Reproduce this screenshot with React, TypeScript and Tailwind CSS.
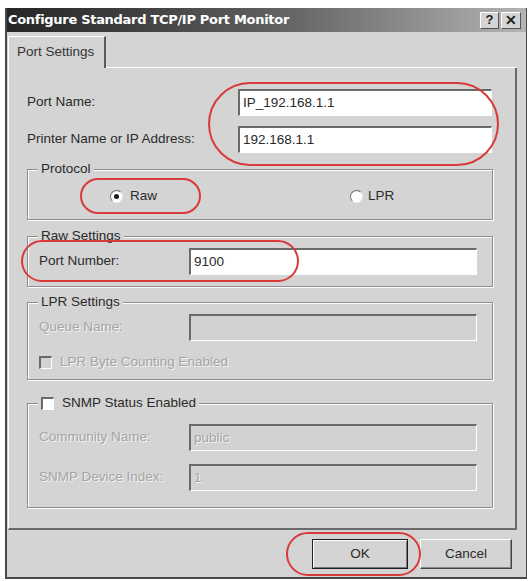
import React from 'react';

const font = { fontFamily: '"Liberation Sans", Arial, sans-serif' };

// Sunken edit box, classic 3D look
const Field = ({ value, disabled, className = '' }: { value?: string; disabled?: boolean; className?: string }) => (
  <div
    className={`h-[27px] border-t-2 border-l-2 border-b border-r border-t-[#6a6a6a] border-l-[#6a6a6a] border-b-white border-r-white flex items-center pl-[3px] text-[13.5px] ${
      disabled ? 'bg-[#d2d2d2] text-[#a4a4a4]' : 'bg-white text-[#2a2a2a]'
    } ${className}`}
  >
    {value}
  </div>
);

const GroupBox = ({
  title,
  className = '',
  children,
  disabledTitle,
}: {
  title: React.ReactNode;
  className?: string;
  children: React.ReactNode;
  disabledTitle?: boolean;
}) => (
  <div className={`relative border border-[#8e8e8e] shadow-[inset_1px_1px_0_#fff,1px_1px_0_#fff] ${className}`}>
    <div
      className={`absolute -top-[9px] left-[10px] bg-[#d4d4d4] px-[3px] text-[13.5px] leading-[16px] ${
        disabledTitle ? 'text-[#a4a4a4]' : 'text-[#2a2a2a]'
      }`}
    >
      {title}
    </div>
    {children}
  </div>
);

const Checkbox = ({ disabled }: { disabled?: boolean }) => (
  <span
    className={`inline-block w-[13px] h-[13px] border-t-2 border-l-2 border-b border-r border-t-[#6a6a6a] border-l-[#6a6a6a] border-b-white border-r-white ${
      disabled ? 'bg-[#d2d2d2]' : 'bg-white'
    }`}
  />
);

const Radio = ({ checked }: { checked?: boolean }) => (
  <span className="inline-flex w-[13px] h-[13px] rounded-full bg-white border border-t-[#6a6a6a] border-l-[#6a6a6a] border-b-[#f0f0f0] border-r-[#f0f0f0] items-center justify-center">
    {checked && <span className="w-[5px] h-[5px] rounded-full bg-[#1a1a1a]" />}
  </span>
);

const Ring = ({ className }: { className: string }) => (
  <div className={`absolute rounded-[999px] border-[2.5px] border-[#d83a3a] pointer-events-none ${className}`} />
);

export default function App() {
  return (
    <div className="relative w-[529px] h-[581px] bg-white overflow-hidden" style={font}>
      <div className="ml-[5px] mt-[8px] w-[522px] h-[571px] border-l-2 border-b-2 border-r border-[#4a4a4a] bg-[#d4d4d4] flex flex-col">
        {/* title bar */}
        <div className="h-[24px] flex items-center bg-gradient-to-r from-[#262626] via-[#5e5e5e] to-[#b4b4b4] overflow-hidden">
          <span
            className="ml-[1px] text-white font-bold text-[13px] whitespace-nowrap tracking-[-0.3px]"
            style={{ fontFamily: '"DejaVu Sans", Verdana, sans-serif' }}
          >
            Configure Standard TCP/IP Port Monitor
          </span>
          <div className="ml-auto mr-[5px] flex gap-[2px]">
            <div className="w-[19px] h-[17px] bg-[#d4d4d4] border border-t-white border-l-white border-b-[#555] border-r-[#555] flex items-center justify-center text-[13px] font-bold text-[#222]">
              ?
            </div>
            <div className="w-[20px] h-[17px] bg-[#d4d4d4] border border-t-white border-l-white border-b-[#555] border-r-[#555] flex items-center justify-center text-[14px] font-bold text-[#222]">
              ✕
            </div>
          </div>
        </div>

        {/* tab strip */}
        <div className="pl-[1px] pt-[4px] flex items-end">
          <div className="w-[98px] h-[32px] border-t border-l border-white border-r-2 border-r-[#5a5a5a] flex items-center pl-[8px] text-[13.5px] text-[#333]">
            Port Settings
          </div>
          <div className="w-[410px] border-b border-white" />
        </div>

        {/* tab page */}
        <div className="ml-[1px] w-[509px] h-[462px] border-l border-white border-r-2 border-r-[#6a6a6a] border-b-2 border-b-[#6a6a6a] px-[18px] pt-[21px] text-[#2a2a2a] text-[13.5px]">
          <div className="flex items-center">
            <span className="w-[211px]">Port Name:</span>
            <Field value="IP_192.168.1.1" className="w-[254px]" />
          </div>
          <div className="flex items-center mt-[10px]">
            <span className="w-[211px]">Printer Name or IP Address:</span>
            <Field value="192.168.1.1" className="w-[254px]" />
          </div>

          <GroupBox title="Protocol" className="mt-[16px] h-[51px] w-[466px]">
            <div className="flex items-center h-full pt-[3px]">
              <div className="ml-[82px] flex items-center gap-[7px]">
                <Radio checked />
                <span>Raw</span>
              </div>
              <div className="ml-[193px] flex items-center gap-[5px]">
                <Radio />
                <span>LPR</span>
              </div>
            </div>
          </GroupBox>

          <GroupBox title="Raw Settings" className="mt-[16px] h-[51px] w-[466px]">
            <div className="flex items-center pl-[11px] pt-[11px]">
              <span className="w-[150px]">Port Number:</span>
              <Field value="9100" className="w-[288px]" />
            </div>
          </GroupBox>

          <GroupBox title="LPR Settings" className="mt-[15px] h-[78px] w-[466px]">
            <div className="flex items-center pl-[11px] pt-[11px] text-[#a4a4a4] [text-shadow:1px_1px_0_#f4f4f4]">
              <span className="w-[150px]">Queue Name:</span>
              <Field disabled className="w-[288px]" />
            </div>
            <div className="flex items-center gap-[8px] pl-[11px] mt-[11px] text-[#a4a4a4] [text-shadow:1px_1px_0_#f4f4f4]">
              <Checkbox disabled />
              <span>LPR Byte Counting Enabled</span>
            </div>
          </GroupBox>

          <GroupBox
            title={
              <span className="flex items-center gap-[8px]">
                <Checkbox />
                SNMP Status Enabled
              </span>
            }
            className="mt-[23px] h-[105px] w-[466px]"
          >
            <div className="flex items-center pl-[11px] pt-[20px] text-[#a4a4a4] [text-shadow:1px_1px_0_#f4f4f4]">
              <span className="w-[150px]">Community Name:</span>
              <Field disabled value="public" className="w-[288px]" />
            </div>
            <div className="flex items-center pl-[11px] mt-[13px] text-[#a4a4a4] [text-shadow:1px_1px_0_#f4f4f4]">
              <span className="w-[150px]">SNMP Device Index:</span>
              <Field disabled value="1" className="w-[288px]" />
            </div>
          </GroupBox>
        </div>

        {/* dialog buttons */}
        <div className="flex justify-end gap-[12px] pr-[14px] pt-[9px] text-[13.5px] text-[#2a2a2a]">
          <button className="w-[96px] h-[30px] bg-[#d4d4d4] border border-[#1e1e1e] shadow-[inset_1px_1px_0_#fff,inset_-1px_-1px_0_#777]">
            OK
          </button>
          <button className="w-[92px] h-[30px] bg-[#d4d4d4] border border-t-white border-l-white border-b-[#444] border-r-[#444] shadow-[inset_-1px_-1px_0_#888]">
            Cancel
          </button>
        </div>
      </div>

      {/* red markup rings */}
      <Ring className="left-[208px] top-[82px] w-[291px] h-[84px]" />
      <Ring className="left-[80px] top-[178px] w-[121px] h-[36px]" />
      <Ring className="left-[21px] top-[240px] w-[278px] h-[42px]" />
      <Ring className="left-[286px] top-[532px] w-[135px] h-[44px]" />
    </div>
  );
}
